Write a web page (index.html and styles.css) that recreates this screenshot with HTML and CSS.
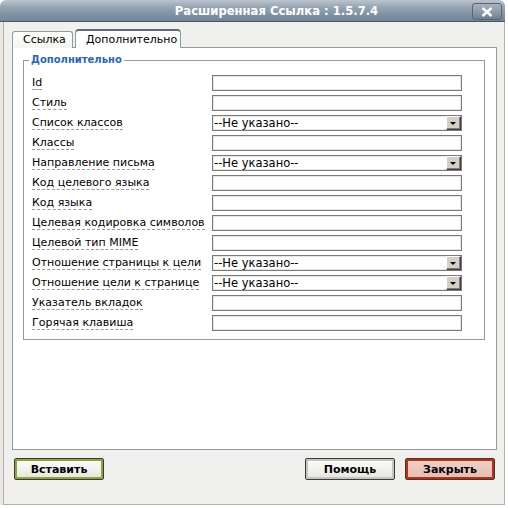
FILE: index.html
```html
<!DOCTYPE html>
<html>
<head>
<meta charset="utf-8">
<link rel="stylesheet" href="styles.css">
</head>
<body>
<div class="window">
  <div class="titlebar">
    <span class="title">Расширенная Ссылка : 1.5.7.4</span>
    <span class="close">
      <svg width="12" height="10" viewBox="0 0 12 10"><path d="M1.5 1 L10.5 9 M10.5 1 L1.5 9" stroke="#fff" stroke-width="2.4" fill="none"/></svg>
    </span>
  </div>
  <div class="outer">
    <div class="frame">
      <div class="tabs">
        <div class="tab">Ссылка</div>
        <div class="tab active">Дополнительно</div>
      </div>
      <div class="panel">
        <fieldset class="group">
          <legend>Дополнительно</legend>
          <div class="grid">
            <span class="lbl"><span>Id</span></span><span class="inp"></span>
            <span class="lbl"><span>Стиль</span></span><span class="inp"></span>
            <span class="lbl"><span>Список классов</span></span><span class="inp sel"><span class="val">--Не указано--</span><span class="arrow"></span></span>
            <span class="lbl"><span>Классы</span></span><span class="inp"></span>
            <span class="lbl"><span>Направление письма</span></span><span class="inp sel"><span class="val">--Не указано--</span><span class="arrow"></span></span>
            <span class="lbl"><span>Код целевого языка</span></span><span class="inp"></span>
            <span class="lbl"><span>Код языка</span></span><span class="inp"></span>
            <span class="lbl"><span>Целевая кодировка символов</span></span><span class="inp"></span>
            <span class="lbl"><span>Целевой тип MIME</span></span><span class="inp"></span>
            <span class="lbl"><span>Отношение страницы к цели</span></span><span class="inp sel"><span class="val">--Не указано--</span><span class="arrow"></span></span>
            <span class="lbl"><span>Отношение цели к странице</span></span><span class="inp sel"><span class="val">--Не указано--</span><span class="arrow"></span></span>
            <span class="lbl"><span>Указатель вкладок</span></span><span class="inp"></span>
            <span class="lbl"><span>Горячая клавиша</span></span><span class="inp"></span>
          </div>
        </fieldset>
      </div>
      <div class="buttons">
        <span class="btn insert">Вставить</span>
        <span class="spacer"></span>
        <span class="btn help">Помощь</span>
        <span class="btn closebtn">Закрыть</span>
      </div>
    </div>
  </div>
</div>
</body>
</html>
```
FILE: styles.css
```css
html, body {
  margin: 0;
  padding: 0;
  background: #ffffff;
}
body {
  font-family: "DejaVu Sans", Verdana, sans-serif;
  font-size: 11px;
  color: #000;
}
.window {
  width: 505px;
  height: 505px;
  display: flex;
  flex-direction: column;
}
.titlebar {
  height: 21px;
  border-bottom: 1px solid #48535e;
  border-radius: 6px 6px 0 0;
  background: linear-gradient(#bcc5ce 0%, #9aa8b6 30%, #7e90a2 70%, #74889b 100%);
  position: relative;
  display: flex;
  align-items: center;
  justify-content: center;
}
.title {
  color: #fff;
  font-weight: bold;
  font-size: 11.6px;
  margin-left: 48px;
}
.close {
  position: absolute;
  right: 3px;
  top: 3px;
  width: 28px;
  height: 15px;
  border: 1px solid #5a6672;
  border-radius: 3px;
  background: linear-gradient(#a8b2bc, #8a98a6 60%, #6f7d8b);
  display: flex;
  align-items: center;
  justify-content: center;
}
.outer {
  flex: 1;
  display: flex;
  padding-left: 3px;
  background: #ebe8e3;
}
.frame {
  flex: 1;
  background: #f0f0ee;
  border-left: 1px solid #b9b1a8;
  border-right: 1px solid #b9b1a8;
  border-bottom: 1px solid #b9b1a8;
  padding: 8px 7px 0 8px;
  display: flex;
  flex-direction: column;
}
.tabs {
  display: flex;
  align-items: flex-end;
  height: 18px;
  gap: 2px;
  margin-bottom: -1px;
  position: relative;
  z-index: 1;
}
.tab {
  height: 16px;
  line-height: 16px;
  padding: 0 10px;
  border: 1px solid #919b9c;
  border-bottom: none;
  border-radius: 3px 3px 0 0;
  background: linear-gradient(#ffffff, #f3f3f0);
  width: 39px;
  text-align: center;
}
.tab.active {
  height: 17px;
  line-height: 17px;
  width: 84px;
  background: #fff;
  border-top: 2px solid #5a6a7a;
  border-radius: 4px 4px 0 0;
}
.panel {
  height: 395px;
  border: 1px solid #919b9c;
  background: #fff;
  padding: 6px 11px 0 10px;
}
.group {
  margin: 0;
  padding: 9px 21px 8px 8px;
  border: 1px solid #919b9c;
}
.group legend {
  color: #2a66b0;
  font-weight: bold;
  font-size: 10px;
  padding: 0 2px;
  margin-left: -3px;
  line-height: 12px;
}
.grid {
  display: grid;
  grid-template-columns: 180px 250px;
  grid-auto-rows: 16px;
  row-gap: 4px;
}
.lbl {
  display: flex;
  align-items: center;
}
.lbl span {
  line-height: 13px;
  border-bottom: 1px dashed #9a9a9a;
}
.inp {
  box-sizing: border-box;
  border: 1px solid #7a7a7a;
  box-shadow: inset 0 0 0 1px #e6e6e6;
  background: #fff;
  display: flex;
  align-items: center;
}
.sel .val {
  flex: 1;
  padding-left: 1px;
  font-size: 11.5px;
}
.arrow {
  width: 15px;
  height: 14px;
  box-sizing: border-box;
  background: #d4d0c8;
  border-top: 1px solid #fff;
  border-left: 1px solid #fff;
  border-right: 1px solid #404040;
  border-bottom: 1px solid #404040;
  box-shadow: inset -1px -1px 0 #808080;
  position: relative;
}
.arrow::after {
  content: "";
  position: absolute;
  left: 3px;
  top: 5px;
  border-left: 3px solid transparent;
  border-right: 3px solid transparent;
  border-top: 3px solid #000;
}
.buttons {
  display: flex;
  padding: 0 2px;
  margin-top: 8px;
  gap: 10px;
}
.spacer {
  flex: 1;
}
.btn {
  width: 90px;
  height: 22px;
  box-sizing: border-box;
  border: 1px solid #3a3a3a;
  border-radius: 2px;
  font-weight: bold;
  font-size: 11px;
  display: flex;
  align-items: center;
  justify-content: center;
  background: linear-gradient(#fdfdfb, #f0f0ea 60%, #e4e4dc);
}
.btn.insert {
  box-shadow: inset 0 0 0 2px #8ea33c;
}
.btn.help {
  box-shadow: inset 0 0 0 2px #c4c4c0;
}
.btn.closebtn {
  background: linear-gradient(#f0d0c8, #e6bcb2);
  box-shadow: inset 0 0 0 2px #b8300f;
}
```
